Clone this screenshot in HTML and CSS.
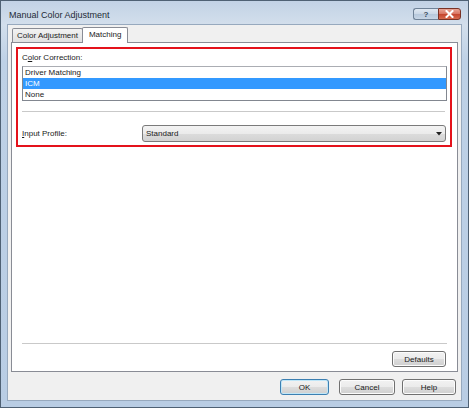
FILE: index.html
```html
<!DOCTYPE html>
<html>
<head>
<meta charset="utf-8">
<link rel="stylesheet" href="styles.css">
</head>
<body>
<div class="window">
  <div class="titlebar">
    <span class="title">Manual Color Adjustment</span>
    <div class="caption-btns">
      <span class="cap-btn cap-help">?</span>
      <span class="cap-btn cap-close"><svg width="9" height="8" viewBox="0 0 9 8"><path d="M1.5 1 L7.5 7 M7.5 1 L1.5 7" stroke="#fff" stroke-width="2" stroke-linecap="square"/></svg></span>
    </div>
  </div>
  <div class="client">
    <div class="tabs">
      <div class="tab">Color Adjustment</div>
      <div class="tab active">Matching</div>
    </div>
    <div class="panel">
      <div class="highlight">
        <div class="label">C<u>o</u>lor Correction:</div>
        <div class="listbox">
          <div class="item">Driver Matching</div>
          <div class="item selected">ICM</div>
          <div class="item">None</div>
        </div>
        <div class="sep"></div>
        <div class="profile-row">
          <span class="label"><u>I</u>nput Profile:</span>
          <div class="combo"><span>Standard</span><svg width="6" height="4" viewBox="0 0 6 4"><path d="M0 0 H6 L3 3.5 Z" fill="#222"/></svg></div>
        </div>
      </div>
      <div class="spacer"></div>
      <div class="sep bottom-sep"></div>
      <div class="defaults-row"><span class="btn btn-defaults">Defaults</span></div>
    </div>
    <div class="buttons">
      <span class="btn btn-ok">OK</span>
      <span class="btn btn-cancel">Cancel</span>
      <span class="btn btn-help">Help</span>
    </div>
  </div>
</div>
</body>
</html>
```

FILE: styles.css
```css
html, body {
  margin: 0;
  padding: 0;
  background: #ffffff;
}
body {
  font-family: "Liberation Sans", Arial, sans-serif;
  font-size: 8px;
  color: #1a1a1a;
}
.window {
  width: 469px;
  height: 408px;
  box-sizing: border-box;
  border: 1px solid #4f6174;
  background: linear-gradient(to bottom, #c2d2e5 0px, #d3dfec 24px, #bed1e6 60px, #b9cde4 100%);
  padding: 0 6px 6px 6px;
  display: flex;
  flex-direction: column;
}
.titlebar {
  height: 23px;
  display: flex;
  align-items: flex-start;
  justify-content: space-between;
}
.title {
  font-size: 9px;
  color: #1e2a36;
  margin-left: 2px;
  margin-top: 9px;
}
.caption-btns {
  display: flex;
  margin-top: 7px;
  margin-right: 1px;
}
.cap-btn {
  height: 12px;
  box-sizing: border-box;
  border: 1px solid #6f8297;
  border-radius: 3px;
  display: flex;
  align-items: center;
  justify-content: center;
}
.cap-help {
  width: 25px;
  background: linear-gradient(to bottom, #dfe8f2 0%, #cbd8e7 50%, #b6c8dc 51%, #c7d6e6 100%);
  font-size: 8px;
  font-weight: bold;
  color: #3b4c5f;
  border-right: none;
  border-radius: 3px 0 0 3px;
}
.cap-close {
  width: 23px;
  background: linear-gradient(to bottom, #e9a596 0%, #d87360 50%, #c4432c 51%, #d56a4e 100%);
  border-color: #7a3326;
  border-radius: 0 3px 3px 0;
}
.client {
  flex: 1;
  background: #f0f0f0;
  border: 1px solid #97a9be;
  padding: 2px 3px 5px 3px;
  display: flex;
  flex-direction: column;
}
.tabs {
  height: 15px;
  display: flex;
  align-items: flex-end;
  padding-left: 1px;
}
.tab {
  height: 14px;
  box-sizing: border-box;
  border: 1px solid #898c95;
  border-bottom: none;
  border-radius: 2px 2px 0 0;
  background: linear-gradient(to bottom, #f2f2f2, #e1e1e1);
  padding: 0 4px;
  display: flex;
  align-items: center;
}
.tab.active {
  height: 16px;
  margin-bottom: -1px;
  margin-left: -1px;
  position: relative;
  z-index: 1;
  background: #ffffff;
  padding: 0 6px 2px 6px;
}
.panel {
  flex: 1;
  background: #ffffff;
  border: 1px solid #898c95;
  display: flex;
  flex-direction: column;
}
.highlight {
  margin: 4px 5px 0 4px;
  border: 2px solid #e4121b;
  padding: 4px 3px 3px 4px;
  display: flex;
  flex-direction: column;
}
.label {
  line-height: 10px;
  height: 10px;
}
.listbox {
  margin-top: 3px;
  border: 1px solid #828790;
  border-top-color: #abadb3;
  background: #ffffff;
}
.item {
  height: 11px;
  line-height: 11px;
  padding-left: 2px;
}
.item.selected {
  background: #3399ff;
  color: #ffffff;
}
.sep {
  height: 1px;
  background: #c9c9c9;
}
.highlight .sep {
  margin: 10px 2px 0 0;
}
.profile-row {
  margin-top: 13px;
  display: grid;
  grid-template-columns: 120px 1fr;
  align-items: center;
  margin-right: 1px;
}
.combo {
  height: 17px;
  box-sizing: border-box;
  border: 1px solid #7a7a7a;
  border-radius: 3px;
  background: linear-gradient(to bottom, #f3f3f3 0%, #ebebeb 50%, #dcdcdc 51%, #d2d2d2 100%);
  display: flex;
  align-items: center;
  justify-content: space-between;
  padding: 0 3px 0 3px;
}
.spacer {
  flex: 1;
}
.bottom-sep {
  margin: 0 10px 0 10px;
}
.defaults-row {
  display: flex;
  justify-content: flex-end;
  margin-top: 7px;
  padding: 0 11px 4px 0;
}
.btn {
  height: 16px;
  box-sizing: border-box;
  border: 1px solid #707070;
  border-radius: 3px;
  background: linear-gradient(to bottom, #f2f2f2 0%, #ebebeb 50%, #dddddd 51%, #cfcfcf 100%);
  display: flex;
  align-items: center;
  justify-content: center;
  box-shadow: inset 0 0 0 1px #fcfcfc;
}
.btn-defaults {
  width: 54px;
}
.buttons {
  margin-top: 7px;
  display: flex;
  justify-content: flex-end;
  padding-right: 2px;
}
.btn-ok {
  width: 49px;
  border-color: #3c7fb1;
  box-shadow: inset 0 0 0 1px #bfe6f8;
}
.btn-cancel {
  width: 56px;
  margin-left: 10px;
}
.btn-help {
  width: 54px;
  margin-left: 7px;
}
```
